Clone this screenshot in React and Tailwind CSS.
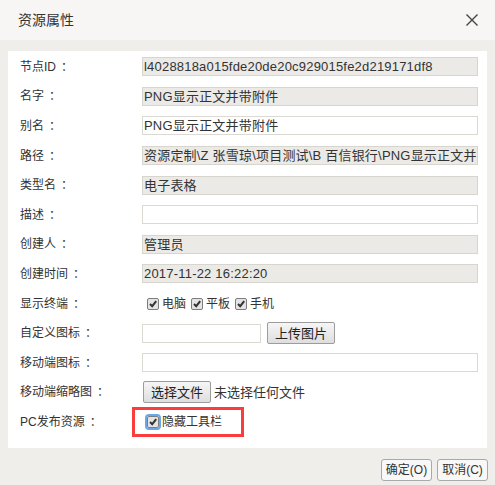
import React from "react";

const F = "font-['Liberation_Sans','Noto_Sans_CJK_SC',sans-serif]";

function Check({ focus }) {
  return (
    <span
      className={`relative inline-flex items-center justify-center w-[12px] h-[12px] shrink-0 rounded-[2px] border border-[#7d7d7d] bg-[#e4e4e4] ${
        focus ? "outline outline-2 outline-[#6aa6e8] outline-offset-0" : ""
      }`}
    >
      <svg width="10" height="10" viewBox="0 0 10 10">
        <path d="M2 5 L4.2 7.2 L8.2 2.2" fill="none" stroke="#333" strokeWidth="2" />
      </svg>
    </span>
  );
}

function Label({ text, w = "w-[122px]" }) {
  return (
    <div className={`${w} flex items-center text-[12px] text-[#333] leading-none`}>
      <span>{text}</span>
      <span className="ml-[5px]">：</span>
    </div>
  );
}

function Row({ label, children }) {
  return (
    <div className="flex items-center h-[29.6px]">
      <Label text={label} />
      {children}
    </div>
  );
}

function Input({ value = "", ro, w = "w-[336px]" }) {
  return (
    <div
      className={`${w} h-[19px] border flex items-center px-[1px] overflow-hidden whitespace-nowrap text-[13px] tracking-[0.2px] text-[#333] leading-none ${
        ro ? "bg-[#ebeae6] border-[#d8d5cf]" : "bg-white border-[#dcd9d3]"
      }`}
    >
      <span className="shrink-0">{value}</span>
    </div>
  );
}

function Btn({ children, w }) {
  return (
    <div
      className={`${w} h-[22px] flex items-center justify-center text-[13px] text-[#222] leading-none border border-[#9c9c9c] rounded-[2px] bg-gradient-to-b from-[#f6f6f6] to-[#dedede]`}
    >
      {children}
    </div>
  );
}

export default function App() {
  return (
    <div className={`w-[495px] h-[485px] bg-[#efeeeb] flex flex-col ${F}`}>
      <div className="h-10 bg-[#f7f6f4] flex items-center justify-between pl-[18px] pr-[17px]">
        <span className="text-[14px] text-[#333] leading-none">资源属性</span>
        <svg width="12" height="12" viewBox="0 0 12 12">
          <path d="M0.5 0.5 L11.5 11.5 M11.5 0.5 L0.5 11.5" stroke="#444" strokeWidth="1.4" />
        </svg>
      </div>
      <div className="px-2 pt-[11px]">
        <div className="bg-white h-[397px] pl-3 pt-[1px]">
          <Row label="节点ID">
            <Input ro value="l4028818a015fde20de20c929015fe2d219171df8" />
          </Row>
          <Row label="名字">
            <Input ro value="PNG显示正文并带附件" />
          </Row>
          <Row label="别名">
            <Input value="PNG显示正文并带附件" />
          </Row>
          <Row label="路径">
            <Input ro value="资源定制\Z 张雪琼\项目测试\B 百信银行\PNG显示正文并" />
          </Row>
          <Row label="类型名">
            <Input ro value="电子表格" />
          </Row>
          <Row label="描述">
            <Input />
          </Row>
          <Row label="创建人">
            <Input ro value="管理员" />
          </Row>
          <Row label="创建时间">
            <Input ro value="2017-11-22 16:22:20" />
          </Row>
          <Row label="显示终端">
            <div className="flex items-center pl-[5px] text-[12px] text-[#333] leading-none">
              <Check />
              <span className="ml-[3px]">电脑</span>
              <span className="ml-[5px] flex"><Check /></span>
              <span className="ml-[3px]">平板</span>
              <span className="ml-[5px] flex"><Check /></span>
              <span className="ml-[3px]">手机</span>
            </div>
          </Row>
          <Row label="自定义图标">
            <div className="flex items-center gap-[6px]">
              <Input w="w-[119px]" />
              <Btn w="w-[68px]">上传图片</Btn>
            </div>
          </Row>
          <Row label="移动端图标">
            <Input />
          </Row>
          <Row label="移动端缩略图">
            <div className="flex items-center pl-[1px]">
              <Btn w="w-[68px]">选择文件</Btn>
              <span className="ml-[3px] text-[13px] text-[#333] leading-none">未选择任何文件</span>
            </div>
          </Row>
          <div className="flex items-center h-[29.6px]">
            <Label text="PC发布资源" w="w-[112px]" />
            <div className="w-[112px] h-full border-[3px] border-[#f93d3d] flex items-center pl-[12px] text-[12px] text-[#333] leading-none">
              <Check focus />
              <span className="ml-[3px]">隐藏工具栏</span>
            </div>
          </div>
        </div>
      </div>
      <div className="flex justify-end gap-[5px] pr-[7px] pt-[11px]">
        <div className="w-[51px] h-[22px] flex items-center justify-center text-[12px] text-[#333] leading-none border border-[#a9a9a9] rounded-[3px] bg-[#f8f8f8]">
          确定(O)
        </div>
        <div className="w-[51px] h-[22px] flex items-center justify-center text-[12px] text-[#333] leading-none border border-[#a9a9a9] rounded-[3px] bg-[#f8f8f8]">
          取消(C)
        </div>
      </div>
    </div>
  );
}
